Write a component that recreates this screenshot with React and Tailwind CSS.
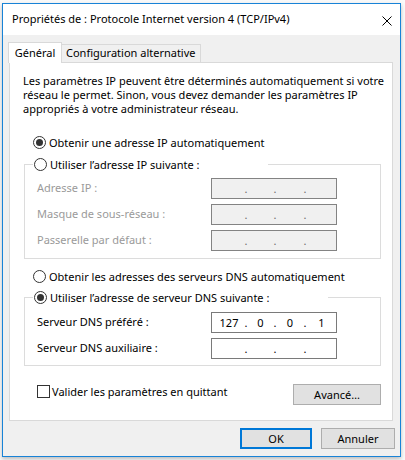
import React from "react";

const Radio = ({ checked, label, className = "" }) => (
  <div className={`flex items-center h-[13px] ${className}`}>
    <span className="w-[13px] h-[13px] rounded-full border border-[#333] bg-white flex items-center justify-center shrink-0">
      {checked && <span className="w-[7px] h-[7px] rounded-full bg-[#333]" />}
    </span>
    <span className="ml-[3px] leading-[13px] whitespace-nowrap">{label}</span>
  </div>
);

const IpBox = ({ values = ["", "", "", ""], disabled }) => (
  <div
    className={`w-[126px] h-[21px] border pl-[2px] grid grid-cols-[30px_4px_25px_4px_26px_4px_29px] items-center leading-[13px] ${
      disabled ? "border-[#838383] bg-[#f0f0f0] text-[#6d6d6d]" : "border-[#7a7a7a] bg-white text-black"
    }`}
  >
    <span className="text-center">{values[0]}</span>
    <span className="text-center">.</span>
    <span className="text-center">{values[1]}</span>
    <span className="text-center">.</span>
    <span className="text-center">{values[2]}</span>
    <span className="text-center">.</span>
    <span className="text-center">{values[3]}</span>
  </div>
);

const Field = ({ label, disabled, values }) => (
  <div className="flex items-center h-[21px]">
    <span className={`w-[174px] whitespace-nowrap ${disabled ? "text-[#9a9a9a]" : "text-black"}`}>{label}</span>
    <IpBox disabled={disabled} values={values} />
  </div>
);

export default function App() {
  return (
    <div className="relative w-[405px] h-[460px] overflow-hidden bg-[#fafafa] font-['Noto_Sans',sans-serif] text-[11px] text-black">
      {/* dialog */}
      <div className="absolute left-[2px] top-[3px] w-[399px] h-[454px] border border-[#1883d7] bg-[#f0f0f0] flex flex-col shadow-[0_2px_4px_rgba(0,0,0,0.25)]">
        {/* title bar */}
        <div className="h-[31px] bg-white flex items-center justify-between pl-[9px] pr-[8px] shrink-0">
          <span className="whitespace-nowrap">Propriétés de : Protocole Internet version 4 (TCP/IPv4)</span>
          <svg width="10" height="10" viewBox="0 0 10 10" className="mt-[2px]">
            <path d="M0.5 0.5 L9.5 9.5 M9.5 0.5 L0.5 9.5" stroke="#000" strokeWidth="1" fill="none" />
          </svg>
        </div>

        {/* tabs */}
        <div className="flex items-end pl-[5px] pt-[7px] pr-[7px]">
          <div className="relative z-10 -mb-px h-[21px] w-[54px] bg-white border border-b-0 border-[#d9d9d9] flex items-center justify-center">
            Général
          </div>
          <div className="h-[18px] px-[4px] border border-l-0 border-b-0 border-[#d9d9d9] bg-[#f0f0f0] flex items-center whitespace-nowrap">
            Configuration alternative
          </div>
        </div>

        <div className="mx-[6px] w-[384px] h-[359px] bg-white border border-[#d9d9d9] pl-[13px] pr-[11px] pt-[11px] flex flex-col">
          <div className="leading-[14px] whitespace-nowrap">
            <div>Les paramètres IP peuvent être déterminés automatiquement si votre</div>
            <div>réseau le permet. Sinon, vous devez demander les paramètres IP</div>
            <div>appropriés à votre administrateur réseau.</div>
          </div>

          <Radio checked label="Obtenir une adresse IP automatiquement" className="mt-[20px] ml-[10px]" />

          <fieldset className="mt-[9px] ml-[1px] border border-[#dcdcdc] pl-[8px] pr-[11px] pb-[7px]">
            <legend className="w-[235px] pl-[1px]">
              <Radio label="Utiliser l’adresse IP suivante :" />
            </legend>
            <div className="flex flex-col gap-[5px] pt-[7px] pl-[4px]">
              <Field label="Adresse IP :" disabled />
              <Field label="Masque de sous-réseau :" disabled />
              <Field label="Passerelle par défaut :" disabled />
            </div>
          </fieldset>

          <Radio label="Obtenir les adresses des serveurs DNS automatiquement" className="mt-[11px] ml-[10px]" />

          <fieldset className="mt-[8px] ml-[1px] border border-[#dcdcdc] pl-[8px] pr-[11px] pb-[6px]">
            <legend className="w-[295px] pl-[1px]">
              <Radio checked label="Utiliser l’adresse de serveur DNS suivante :" />
            </legend>
            <div className="flex flex-col gap-[5px] pt-[8px] pl-[4px]">
              <Field label="Serveur DNS préféré :" values={["127", "0", "0", "1"]} />
              <Field label="Serveur DNS auxiliaire :" />
            </div>
          </fieldset>

          <div className="mt-[18px] flex items-start justify-between pl-[14px]">
            <div className="flex items-center h-[13px] mt-[1px]">
              <span className="w-[13px] h-[13px] border border-[#333] bg-white shrink-0" />
              <span className="ml-[2px] leading-[13px] whitespace-nowrap">Valider les paramètres en quittant</span>
            </div>
            <button className="w-[88px] h-[21px] bg-[#e1e1e1] border border-[#adadad] leading-[13px]">
              Avancé…
            </button>
          </div>
        </div>

        <div className="flex justify-end gap-[9px] pr-[5px] pt-[7px]">
          <button className="w-[72px] h-[21px] bg-[#e1e1e1] border-2 border-[#0078d7] leading-[13px]">OK</button>
          <button className="w-[74px] h-[21px] bg-[#e1e1e1] border border-[#adadad] leading-[13px]">Annuler</button>
        </div>
      </div>
    </div>
  );
}
